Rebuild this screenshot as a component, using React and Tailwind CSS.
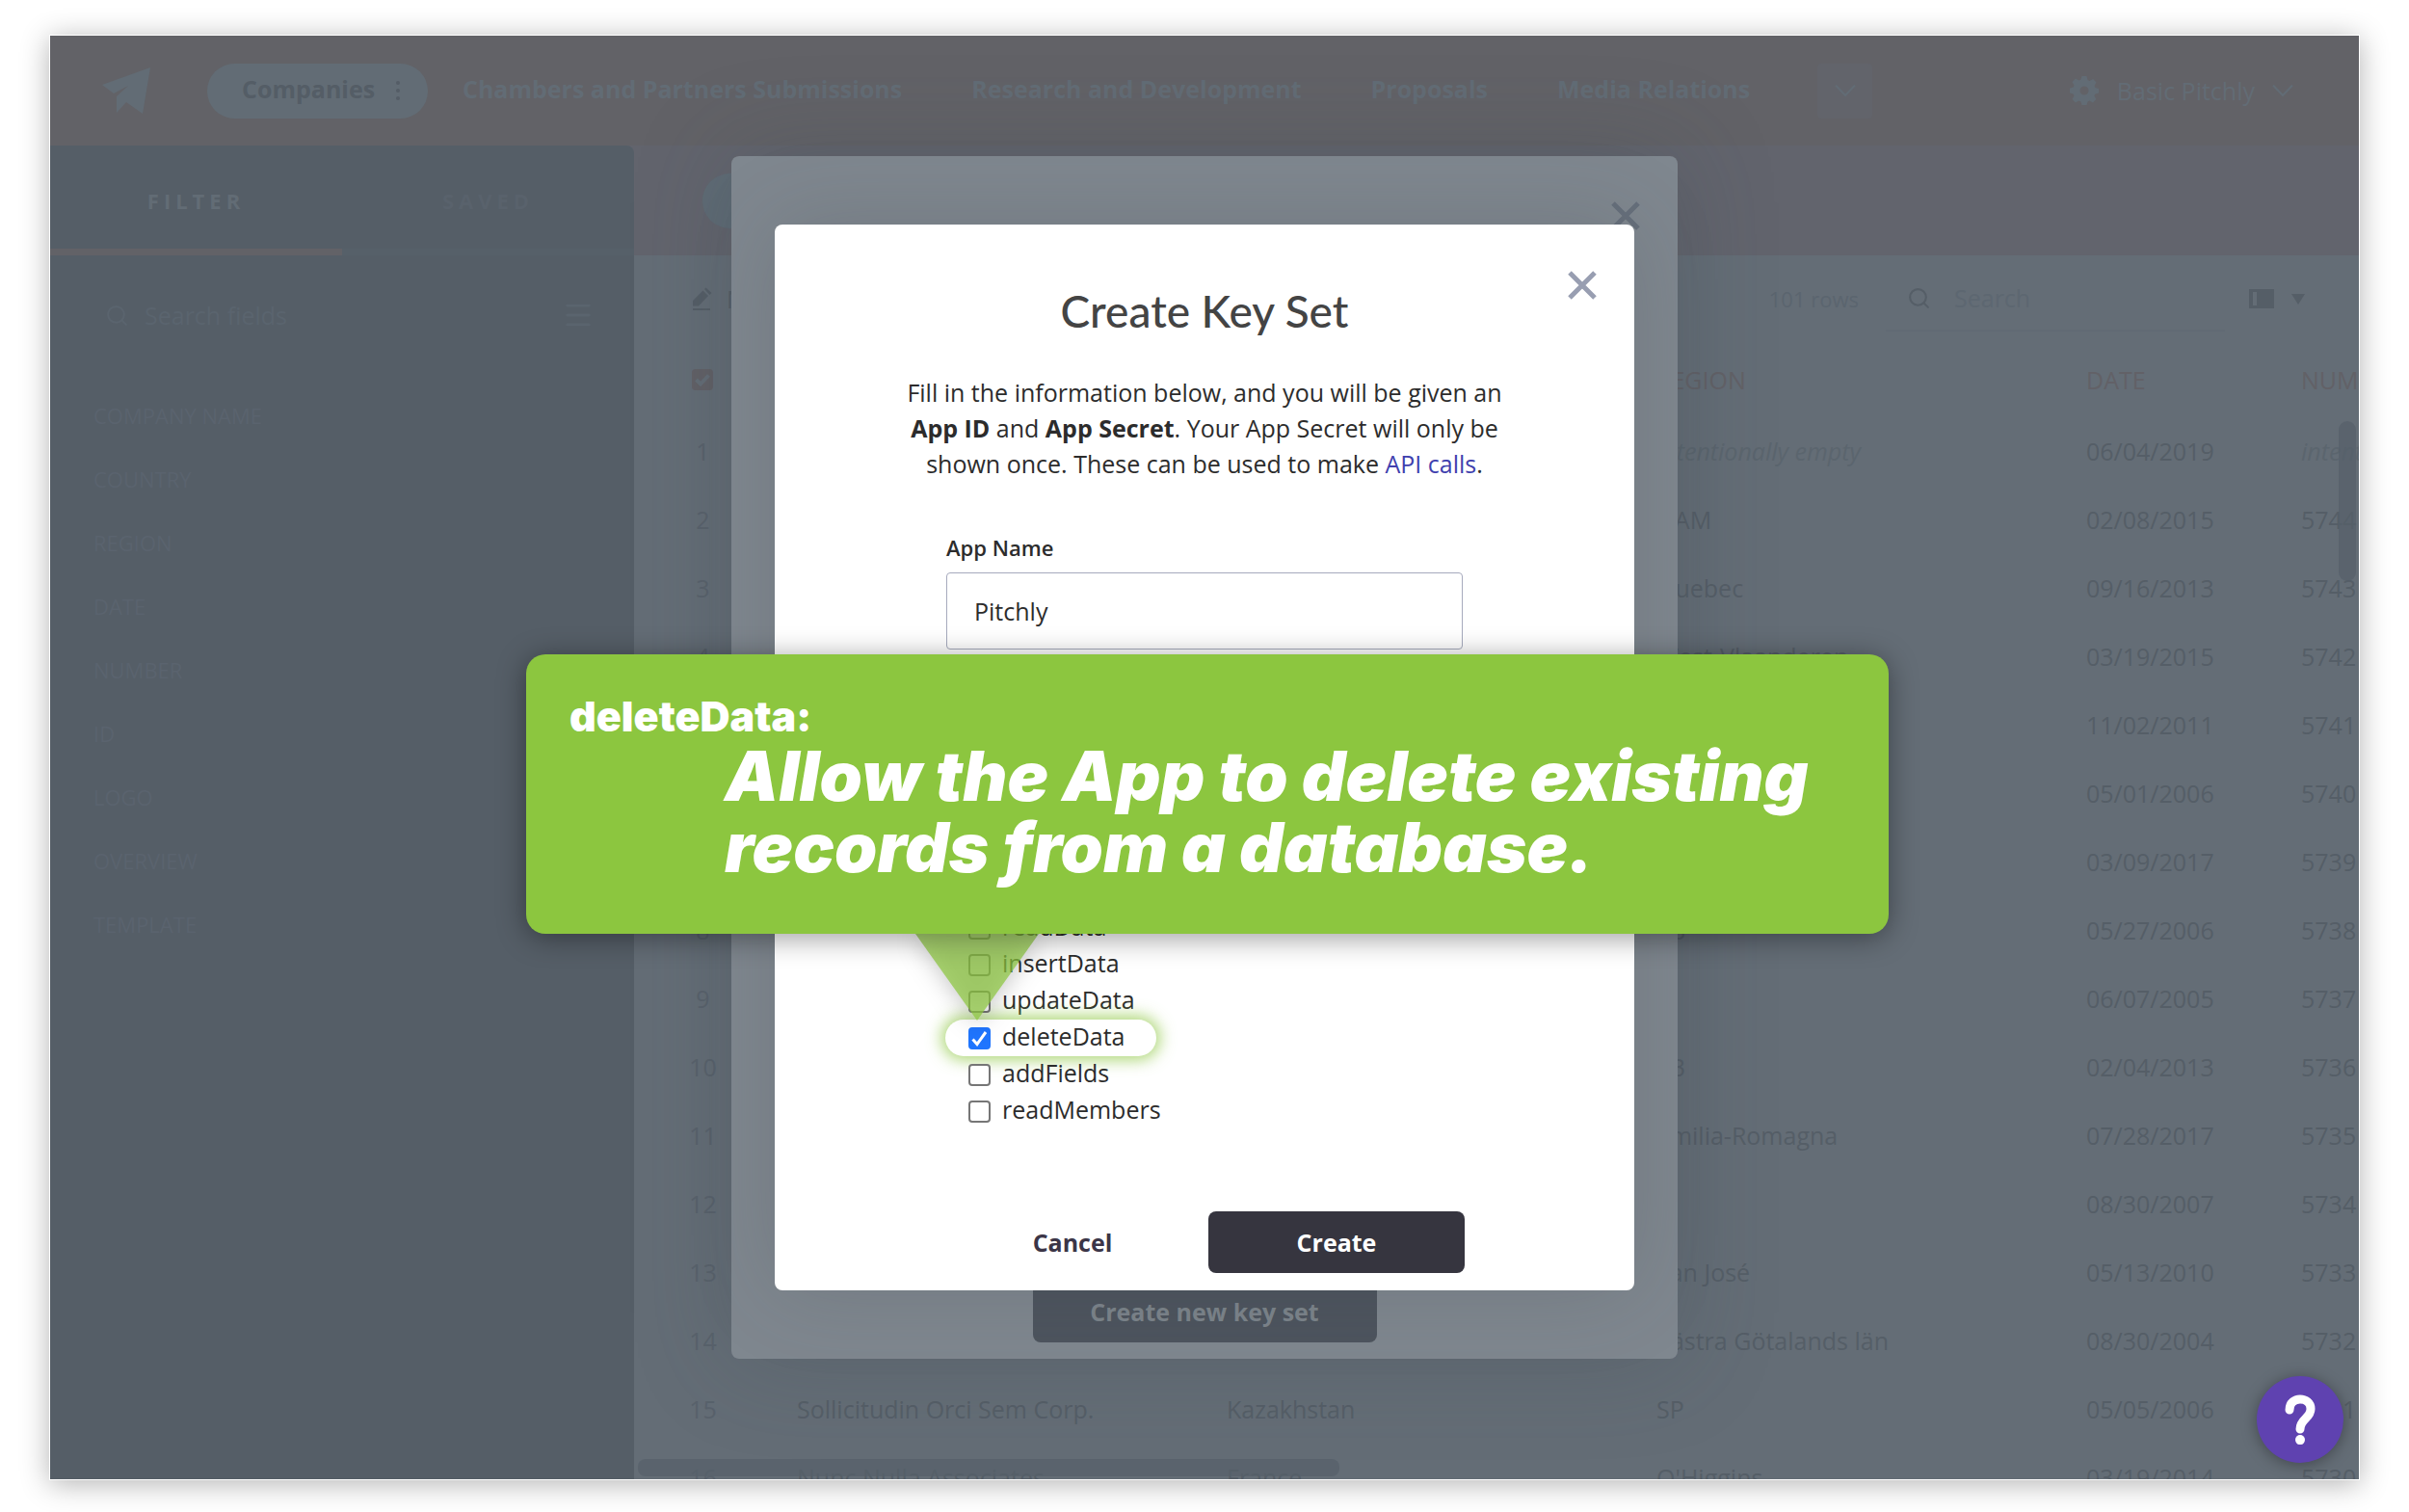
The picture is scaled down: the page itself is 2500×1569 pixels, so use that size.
// This page shows the Companies database with the "Create Key Set" dialog open.
// The database and the key set list sit dimmed behind the dialog, and a green
// callout explains what the deleteData permission does.


//imports
import { useState } from 'react';
import { Menu, Search } from 'lucide-react';
//imports end




//page data
const tabs = ['Chambers and Partners Submissions', 'Research and Development', 'Proposals', 'Media Relations'];

const fields = ['COMPANY NAME', 'COUNTRY', 'REGION', 'DATE', 'NUMBER', 'ID', 'LOGO', 'OVERVIEW', 'TEMPLATE'];

const rows = [
  { region: 'intentionally empty', date: '06/04/2019', number: 'intentionally empty' },
  { region: 'NAM', date: '02/08/2015', number: '5744' },
  { region: 'Quebec', date: '09/16/2013', number: '5743' },
  { region: 'West-Vlaanderen', date: '03/19/2015', number: '5742' },
  { date: '11/02/2011', number: '5741' },
  { date: '05/01/2006', number: '5740' },
  { date: '03/09/2017', number: '5739' },
  { region: 'BS', date: '05/27/2006', number: '5738' },
  { date: '06/07/2005', number: '5737' },
  { region: 'SB', date: '02/04/2013', number: '5736' },
  { region: 'Emilia-Romagna', date: '07/28/2017', number: '5735' },
  { date: '08/30/2007', number: '5734' },
  { region: 'San José', date: '05/13/2010', number: '5733' },
  { region: 'Västra Götalands län', date: '08/30/2004', number: '5732' },
  { name: 'Sollicitudin Orci Sem Corp.', country: 'Kazakhstan', region: 'SP', date: '05/05/2006', number: '5731' },
  { name: 'Nunc Nulla Associates', country: 'France', region: "O'Higgins", date: '03/19/2014', number: '5730' },
];

const permissions = ['readData', 'insertData', 'updateData', 'deleteData', 'addFields', 'readMembers'];
//page data end




//icons
function PlaneLogo() {
  return (
    <svg viewBox="0 0 51 49" className="w-[51px] h-[49px] shrink-0" fill="currentColor" aria-hidden="true">
      <path d="M50 0 42 48 25 36 15 47 V30 L27 19 12 27 0 18Z" />
    </svg>
  );
}

function Gear() {
  return (
    <svg viewBox="0 0 30 30" className="w-[30px] h-[30px] shrink-0" fill="currentColor" aria-hidden="true">
      <path fillRule="evenodd" d="M12.5 0h5l1 4 2 1 3.600-2 3.400 3.400-2 3.600 1 2 3.500 1v4.500l-3.600 1-1 2 2 3.600-3.400 3.400-3.500-2-2 1-1 3.500h-5l-1-3.600-2-.9-3.600 2-3.400-3.400 2-3.600-.9-2L0 17.500v-5l3.700-1 .8-2-2-3.500L5.900 2.500l3.600 2 2-.9ZM15 10.500a4.500 4.500 0 1 0 0 9 4.500 4.500 0 0 0 0-9Z" />
    </svg>
  );
}

function Chevron() {
  return (
    <svg viewBox="0 0 22 14" className="w-[22px] h-[14px] shrink-0" fill="none" stroke="currentColor" strokeWidth="2" aria-hidden="true">
      <path d="M1 1.500 11 12 21 1.500" />
    </svg>
  );
}

function Cross() {
  return (
    <svg viewBox="0 0 30 30" className="w-[30px] h-[30px]" fill="none" stroke="currentColor" strokeWidth="5" aria-hidden="true">
      <path d="M2 2 28 28M28 2 2 28" />
    </svg>
  );
}

function Pencil() {
  return (
    <svg viewBox="0 0 22 24" className="w-[22px] h-[24px] shrink-0" fill="currentColor" aria-hidden="true">
      <path d="M1 14 11.500 3.500 17 9 7 19.500H1ZM13 2 14.500.500 20.500 6 18.500 8ZM1 22h18v2H1Z" />
    </svg>
  );
}
//icons end




//top bar
function TopBar() {
  return (
    <header className="flex items-center h-[114px] shrink-0 pl-[54px] pr-[68px] bg-[#626267] text-[#626c75] whitespace-nowrap">
      <PlaneLogo />
      <nav className="flex items-center ml-[58px] font-bold">
        <button type="button" className="flex items-center justify-between w-[229px] h-[57px] pl-[36px] pr-[29px] rounded-full bg-[#626c75] text-[#545d66]">
          <span className="pb-1">Companies</span>
          <span className="flex flex-col gap-1">
            <span className="size-1 rounded-full bg-[#545d66]" />
            <span className="size-1 rounded-full bg-[#545d66]" />
            <span className="size-1 rounded-full bg-[#545d66]" />
          </span>
        </button>
        {tabs.map((tab) => (
          <a key={tab} href="#" className="px-[36px] pb-1">{tab}</a>
        ))}
        <button type="button" aria-label="More databases" className="flex items-center justify-center ml-[34px] size-[57px] rounded bg-[#62646b]">
          <Chevron />
        </button>
      </nav>
      <button type="button" className="flex items-center ml-auto">
        <Gear />
        <span className="ml-[19px] mr-[18px]">Basic Pitchly</span>
        <Chevron />
      </button>
    </header>
  );
}
//top bar end




//sidebar
function Sidebar() {
  return (
    <aside className="w-[606px] shrink-0 rounded-tr-lg bg-[#555e67]">
      <div className="flex h-[114px] text-[22px] font-bold tracking-[5px]">
        <button type="button" className="flex-1 border-b-[7px] border-[#626267] pt-[7px] text-[#626c75]">FILTER</button>
        <button type="button" className="flex-1 border-b-[7px] border-[#566069] pt-[7px] text-[#59626c]">SAVED</button>
      </div>
      <div className="flex items-center h-[100px] pt-[24px] pl-[57px] pr-[41px] text-[#5a646e]">
        <Search className="size-[25px] shrink-0" strokeWidth={2} />
        <input
          type="text"
          aria-label="Search fields"
          placeholder="Search fields"
          className="flex-1 min-w-0 ml-[16px] bg-transparent outline-none placeholder:text-[#5a646e]"
        />
        <Menu className="size-[34px]" strokeWidth={2} />
      </div>
      <ul className="mt-[33px] pl-[45px] text-[22px] leading-[66px] text-[#5a636e]">
        {fields.map((field) => (
          <li key={field}>{field}</li>
        ))}
      </ul>
    </aside>
  );
}
//sidebar end




//database table
function Database() {
  return (
    <main className="relative flex-1 min-w-0 flex flex-col overflow-hidden bg-[#646d76] text-[#555e67] whitespace-nowrap">
      <div className="flex items-center h-[114px] shrink-0 pl-[71px] bg-[#62646d]">
        <button type="button" aria-label="Add record" className="w-[229px] h-[57px] rounded-full bg-[#5f6b75]" />
      </div>

      <div className="flex items-center h-[90px] shrink-0 pl-[60px] pr-[56px]">
        <button type="button" className="flex items-center gap-[14px]">
          <Pencil />
          New
        </button>
        <span className="ml-auto text-[22px] text-[#5b656f]">101 rows</span>
        <label className="flex items-center gap-[24px] w-[352px] h-[68px] ml-[28px] pl-[22px] border-b-2 border-[#616a74]">
          <Search className="size-[25px] shrink-0" strokeWidth={2} />
          <input
            type="text"
            aria-label="Search"
            placeholder="Search"
            className="min-w-0 flex-1 bg-transparent outline-none placeholder:text-[#5d6771]"
          />
        </label>
        <button type="button" aria-label="Columns" className="flex items-center gap-[18px] ml-[25px]">
          <svg viewBox="0 0 26 20" className="w-[26px] h-[20px]" aria-hidden="true">
            <path fill="currentColor" fillRule="evenodd" d="M0 0h26v20H0ZM4 3v14h4V3Z" />
          </svg>
          <svg viewBox="0 0 14 11" className="w-[14px] h-[11px]" aria-hidden="true">
            <path fill="currentColor" d="M0 0h14L7 11Z" />
          </svg>
        </button>
      </div>

      <table className="table-fixed w-[1978px] text-left">
        <colgroup>
          <col className="w-[133px]" />
          <col className="w-[446px]" />
          <col className="w-[446px]" />
          <col className="w-[446px]" />
          <col className="w-[223px]" />
          <col className="w-[284px]" />
        </colgroup>
        <thead>
          <tr className="h-[77px] text-[#626167]">
            <th className="pl-[60px]">
              <span className="relative block size-[22px]">
                <input type="checkbox" aria-label="Select all rows" defaultChecked className="block size-[22px] appearance-none rounded bg-[#626167]" />
                <svg viewBox="0 0 22 22" className="absolute inset-0 pointer-events-none" fill="none" stroke="#646d76" strokeWidth="4" aria-hidden="true">
                  <path d="M4.500 11 9 15.500 17.500 6.500" />
                </svg>
              </span>
            </th>
            <th className="pl-[36px] font-normal">COMPANY NAME</th>
            <th className="pl-[36px] font-normal">COUNTRY</th>
            <th className="pl-[36px] font-normal">REGION</th>
            <th className="pl-[36px] font-normal">DATE</th>
            <th className="pl-[36px] font-normal">NUMBER</th>
          </tr>
        </thead>
        <tbody>
          {rows.map((row, i) => (
            <tr key={row.date} className="h-[71px]">
              <td className="pl-[10px] text-center text-[#59626c]">{i + 1}</td>
              <td className="pl-[36px]">{row.name}</td>
              <td className="pl-[36px]">{row.country}</td>
              <td className={i === 0 ? 'pl-[36px] italic text-[#5b656e]' : 'pl-[36px]'}>{row.region}</td>
              <td className="pl-[36px]">{row.date}</td>
              <td className={i === 0 ? 'pl-[36px] italic text-[#5b656e]' : 'pl-[36px]'}>{row.number}</td>
            </tr>
          ))}
        </tbody>
      </table>

      {/* scrollbars float over the rows */}
      <div className="absolute top-[286px] right-[3px] w-[18px] h-[166px] rounded-full bg-[#566069]/70" />
      <div className="absolute bottom-[3px] left-[4px] w-[728px] h-[18px] rounded-lg bg-[#566069]/70" />
    </main>
  );
}
//database table end




//key set list, dimmed behind the dialog
function KeySetList() {
  return (
    <div className="absolute inset-0 flex items-center justify-center">
      <section className="relative flex flex-col items-center justify-end w-[982px] h-[1248px] pb-[17px] rounded-lg bg-[#7f878f] shadow-[0_0_100px_rgba(60,70,80,0.25)]">
        <button type="button" aria-label="Close key sets" className="absolute top-[47px] right-[39px] text-[#666f7b]">
          <Cross />
        </button>
        <button type="button" className="w-[357px] h-[64px] rounded-lg bg-[#4d545e] font-bold text-[#7c848b]">
          Create new key set
        </button>
      </section>
    </div>
  );
}
//key set list end




//create key set dialog
function CreateKeySet() {
  const [appName, setAppName] = useState('Pitchly');
  const [granted, setGranted] = useState(['deleteData']);

  // Adds the permission, or takes it away if it is already granted.
  const toggle = (name) => {
    setGranted(granted.includes(name) ? granted.filter((g) => g !== name) : [...granted, name]);
  };

  return (
    <div className="absolute inset-0 flex items-center justify-center">
      <form
        role="dialog"
        aria-label="Create Key Set"
        onSubmit={(e) => e.preventDefault()}
        className="relative w-[892px] px-[176px] pt-[60px] pb-[18px] rounded-lg bg-white text-[#2c2c2c] shadow-[0_0_90px_rgba(60,65,70,0.2)]"
      >
        <button type="button" aria-label="Close" className="absolute top-[48px] right-[39px] text-[#989eb1]">
          <Cross />
        </button>

        <h1 className="font-['Lato',sans-serif] text-[46px] leading-[60px] font-medium text-center text-[#444]">Create Key Set</h1>

        <p className="-mx-[50px] mt-[36px] leading-[37px] text-center">
          Fill in the information below, and you will be given an<br />
          <strong>App ID</strong> and <strong>App Secret</strong>. Your App Secret will only be<br />
          shown once. These can be used to make <a href="#" className="text-[#403fae]">API calls</a>.
        </p>

        <div className="mx-[2px]">
          <label htmlFor="app-name" className="block mt-[53px] text-[22px] leading-[30px] font-semibold">App Name</label>
          <input
            id="app-name"
            type="text"
            value={appName}
            onChange={(e) => setAppName(e.target.value)}
            className="block w-full h-[80px] mt-[11px] px-[28px] rounded border border-[#a6aabd] outline-none"
          />
        </div>

        <fieldset className="flex flex-col items-start ml-px pt-[270px]">
          {permissions.map((name) => (
            <label
              key={name}
              className={
                name === 'deleteData'
                  ? 'flex items-center gap-[12px] h-[38px] pl-[24px] pr-[33px] rounded-full bg-white shadow-[0_0_16px_4px_rgba(140,198,63,0.7)]'
                  : 'flex items-center gap-[12px] h-[38px] px-[24px]'
              }
            >
              <span className="relative block size-[23px]">
                <input
                  type="checkbox"
                  checked={granted.includes(name)}
                  onChange={() => toggle(name)}
                  className="block size-[23px] appearance-none rounded border-2 border-[#767676] bg-white checked:border-[#1f75fe] checked:bg-[#1f75fe]"
                />
                {granted.includes(name) && (
                  <svg viewBox="0 0 23 23" className="absolute inset-0 pointer-events-none" fill="none" stroke="white" strokeWidth="3" aria-hidden="true">
                    <path d="M4.500 12.500 9 17.500 18 5" />
                  </svg>
                )}
              </span>
              <span className="pb-1">{name}</span>
            </label>
          ))}
        </fieldset>

        <div className="flex gap-[8px] mt-[85px] font-bold">
          <button type="button" className="flex-1 h-[64px] text-[#3b3547]">Cancel</button>
          <button type="submit" className="flex-1 h-[64px] rounded-lg bg-[#36353f] text-white">Create</button>
        </div>
      </form>
    </div>
  );
}
//create key set dialog end




//green callout
function Callout() {
  return (
    <>
      <svg viewBox="0 0 128 90" className="absolute top-[932px] left-[898px] w-[128px] h-[90px] pointer-events-none drop-shadow-[0_4px_12px_rgba(0,0,0,0.3)]" aria-hidden="true">
        <path fill="#8cc63f" fillOpacity="0.72" d="M0 0H128L64 90Z" />
      </svg>
      <aside className="absolute top-[642px] left-[494px] right-[488px] h-[290px] pl-[45px] pt-[39px] rounded-[20px] bg-[#8cc63f] font-['Inter',sans-serif] font-black text-white whitespace-nowrap shadow-[0_4px_30px_rgba(0,0,0,0.4)]">
        <h2 className="text-[43px] leading-[50px]">deleteData:</h2>
        <p className="pl-[161px] text-[71px] leading-[74px] italic">
          Allow the App to delete existing<br />
          records from a database.
        </p>
      </aside>
    </>
  );
}
//green callout end




//main component
export default function App() {
  return (
    <div className="min-h-screen px-[51px] pt-[36px] pb-[33px] bg-white font-['Open_Sans',sans-serif] text-[25px] leading-[34px]">
      <div className="relative flex flex-col h-[calc(100vh-69px)] overflow-hidden border border-white shadow-[0_4px_28px_rgba(0,0,0,0.3)]">
        <TopBar />
        <div className="flex flex-1 min-h-0 bg-[#62646d]">
          <Sidebar />
          <Database />
        </div>
        <KeySetList />
        <CreateKeySet />
        <Callout />
        <button type="button" aria-label="Help" className="absolute right-[16px] bottom-[17px] flex items-center justify-center size-[90px] rounded-full bg-[#5f42b0] shadow-[0_2px_16px_rgba(0,0,0,0.35)]">
          <svg viewBox="0 0 34 52" className="w-[34px] h-[52px]" fill="none" stroke="white" strokeWidth="9" strokeLinecap="round" strokeLinejoin="round" aria-hidden="true">
            <path d="M6 16C6 1 28 2 28 15 28 25 17 25 17 36" />
            <path d="M17 47V47.100" strokeWidth="10" />
          </svg>
        </button>
      </div>
    </div>
  );
}
//main component end
